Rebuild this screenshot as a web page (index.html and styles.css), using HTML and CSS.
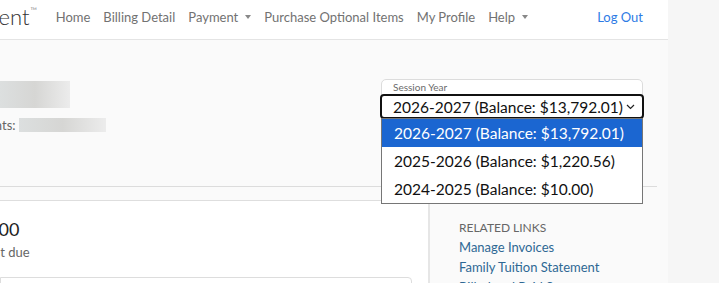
FILE: index.html
```html
<!DOCTYPE html>
<html>
<head>
    <meta charset="utf-8">
    <title>Billing</title>
    <link rel="stylesheet" href="styles.css">
</head>
<body>
    <div class="page">
        <nav class="topbar">
            <a class="brand" href="#">Tuition Management<sup>&trade;</sup></a>
            <ul class="menu">
                <li><a href="#">Home</a></li>
                <li><a href="#">Billing Detail</a></li>
                <li><a href="#" class="caret">Payment</a></li>
                <li><a href="#">Purchase Optional Items</a></li>
                <li><a href="#">My Profile</a></li>
                <li><a href="#" class="caret">Help</a></li>
            </ul>
            <a class="logout" href="#">Log Out</a>
        </nav>

        <header class="account">
            <div class="who">
                <div class="blur name"></div>
                <div class="students">Students: <span class="blur kids"></span></div>
            </div>
            <div class="session">
                <label class="session-label">Session Year</label>
                <div class="select">
                    <span>2026-2027 (Balance: $13,792.01)</span>
                    <svg class="chev" width="9" height="6" viewBox="0 0 9 6"><path d="M1 1l3.5 3.5L8 1" fill="none" stroke="#222" stroke-width="1.2"/></svg>
                </div>
                <ul class="options">
                    <li class="selected">2026-2027 (Balance: $13,792.01)</li>
                    <li>2025-2026 (Balance: $1,220.56)</li>
                    <li>2024-2025 (Balance: $10.00)</li>
                </ul>
            </div>
        </header>

        <main class="content">
            <section class="summary">
                <div class="amount">$10.00</div>
                <div class="due">Amount due</div>
                <div class="panel"></div>
            </section>
            <aside class="related">
                <h4>Related Links</h4>
                <a href="#">Manage Invoices</a>
                <a href="#">Family Tuition Statement</a>
                <a href="#">Billed and Paid Summary</a>
            </aside>
        </main>
    </div>
</body>
</html>
```

FILE: styles.css
```css
body {
    margin: 0;
    background-color: #f6f6f6;
    font-family: Lato, "Open Sans", sans-serif;
    color: #222;
    overflow: hidden;
}

a {
    text-decoration: none;
}

.page {
    width: 668px;
    background-color: #fafafa;
}

/* top navigation */
.topbar {
    display: flex;
    align-items: center;
    box-sizing: border-box;
    height: 40px;
    padding-bottom: 6px;
    background-color: #fff;
    border-bottom: 1px solid #e4e4e4;
}

.brand {
    flex-shrink: 0;
    margin-left: -165px;
    font-size: 22px;
    font-weight: 300;
    color: #333;
}

    .brand sup {
        font-size: 9px;
        position: relative;
        top: -3px;
        margin-left: 1px;
    }

.menu {
    display: flex;
    list-style: none;
    margin: 0 0 0 12px;
    padding: 0;
}

    .menu a {
        display: block;
        padding: 0 6.5px;
        font-size: 13px;
        color: #727272;
    }

    .menu .caret::after {
        content: "";
        display: inline-block;
        margin-left: 7px;
        vertical-align: 3px;
        border-top: 4px solid #888;
        border-left: 3.5px solid transparent;
        border-right: 3.5px solid transparent;
    }

.logout {
    margin-left: auto;
    margin-right: 25px;
    font-size: 13px;
    color: #2d7be5;
}

/* account header */
.account {
    display: flex;
    justify-content: space-between;
    width: 657px;
    height: 146px;
    background-color: #fafafa;
    border-bottom: 1px solid #dcdcdc;
}

.who {
    padding-top: 41px;
}

.blur {
    display: block;
    background: linear-gradient(90deg, #dcdfdf, #d6d6d4 50%, #ececec);
}

.name {
    width: 70px;
    height: 27px;
}

.students {
    display: flex;
    align-items: center;
    margin-top: 9px;
    margin-left: -38px;
    font-size: 13px;
    color: #666;
}

    .students .kids {
        width: 87px;
        height: 14px;
        margin-left: 3px;
    }

.session {
    position: relative;
    width: 260px;
    height: 38px;
    margin: 39px 14px 0 0;
    background-color: #fff;
    border: 1px solid #dcdcdc;
    border-radius: 5px;
}

.session-label {
    display: block;
    padding: 2px 0 0 11px;
    font-size: 10px;
    color: #6b6b6b;
    line-height: 11px;
}

.select {
    display: flex;
    align-items: center;
    justify-content: space-between;
    height: 21px;
    margin: 1px -2px 0 -2px;
    padding: 0 7px 0 11px;
    border: 2px solid #111;
    border-radius: 4px;
    background-color: #fff;
    font-size: 15.5px;
    color: #111;
}

.options {
    position: absolute;
    top: 38px;
    left: -1px;
    width: 260px;
    margin: 0;
    padding: 0;
    list-style: none;
    background-color: #fff;
    border: 1px solid #767676;
    z-index: 2;
}

    .options li {
        height: 28px;
        line-height: 28px;
        padding-left: 12px;
        font-size: 15.5px;
        color: #111;
    }

    .options .selected {
        background-color: #1b66d1;
        color: #fff;
    }

/* main content */
.content {
    display: flex;
    margin-top: 13px;
}

.summary {
    width: 428px;
    height: 90px;
    background-color: #fff;
    border-top: 1px solid #dedede;
    border-right: 2px solid #e6e6e6;
}

.amount {
    margin: 17px 0 0 -37px;
    font-size: 18px;
    color: #222;
}

.due {
    margin: 4px 0 0 -41px;
    font-size: 13px;
    color: #666;
}

.panel {
    width: 410px;
    height: 30px;
    margin-top: 17px;
    border: 1px solid #dddddd;
    border-radius: 0 4px 0 0;
}

.related {
    padding: 20px 0 0 29px;
}

    .related h4 {
        margin: 0 0 2px 0;
        font-size: 12px;
        font-weight: 400;
        text-transform: uppercase;
        color: #666;
    }

    .related a {
        display: block;
        font-size: 13px;
        line-height: 20px;
        color: #2e6894;
    }
```
